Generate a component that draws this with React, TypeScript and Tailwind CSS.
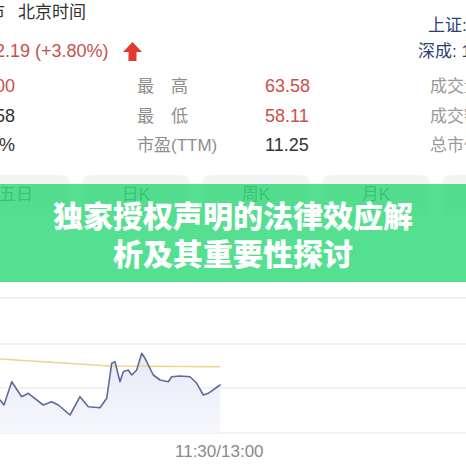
import React from "react";

const pts: [number, number][] = [
  [0, 110], [4, 115], [11.7, 91.7], [21.7, 106.7], [28.3, 103.3], [43.3, 115], [51.7, 111.7], [58.3, 115],
  [70, 125], [80, 106.7], [88.3, 116.7], [100, 117.7], [106.7, 108.3], [111.7, 73.3], [115, 71.7], [120, 91.7],
  [123.3, 81.7], [128.3, 80], [131.7, 85], [136.7, 80], [141.7, 63.3], [145, 68.3], [153.3, 85], [160, 90],
  [168.3, 91.7], [171.7, 86.7], [180, 86], [190, 86.7], [196.7, 93.3], [203.3, 105], [208.3, 103.3], [220, 95],
];

function Chart() {
  const line = pts.map((p) => p.join(",")).join(" ");
  const area = `0,143 ${line} 220,143`;
  return (
    <svg width="466" height="150" viewBox="0 0 466 150" className="block">
      <defs>
        <linearGradient id="fillg" x1="0" y1="0" x2="0" y2="1">
          <stop offset="0" stopColor="#e6eaf7" />
          <stop offset="1" stopColor="#f7f8fc" />
        </linearGradient>
      </defs>
      {[8, 54, 98, 143].map((y) => (
        <line key={y} x1="0" x2="466" y1={y} y2={y} stroke="#eeeeee" strokeWidth="1.5" />
      ))}
      <polygon points={area} fill="url(#fillg)" />
      <polyline points="0,69 110,76 220,76.7" fill="none" stroke="#ecd58c" strokeWidth="1.5" />
      <polyline points={line} fill="none" stroke="#5d6c98" strokeWidth="1.6" strokeLinejoin="round" strokeLinecap="round" />
    </svg>
  );
}

function Row({ a, aColor, label, value, vColor }: { a: string; aColor: string; label: string; value: string; vColor: string }) {
  return (
    <div className="flex h-[29.5px] items-center whitespace-nowrap">
      <div className={`w-[15px] flex justify-end text-[18px] ${aColor}`}>{a}</div>
      <div className="ml-[122px] w-[128px] text-[17px] text-[#8e8e8e]">{label}</div>
      <div className={`text-[18px] ${vColor}`}>{value}</div>
    </div>
  );
}

export default function App() {
  return (
    <div className="relative w-[466px] h-[466px] overflow-hidden bg-white font-['Liberation_Sans','Noto_Sans_CJK_SC',sans-serif]">
      <div className="flex">
        <div className="w-[418px] shrink-0">
          <div className="h-[25px] leading-[25px] text-[17px] text-[#333] -ml-[12px] whitespace-nowrap">
            市<span className="ml-[13px]">北京时间</span>
          </div>
          <div className="mt-[13px] h-[26px] flex items-center whitespace-nowrap">
            <span className="-ml-[5px] text-[18px] text-[#c8504c]">2.19 (+3.80%)</span>
            <svg width="19" height="19" viewBox="0 0 19 19" className="ml-[14px]">
              <path d="M9.5 0 L19 10 L13.5 10 L13.5 19 L5.5 19 L5.5 10 L0 10 Z" fill="#e23a2e" />
            </svg>
          </div>
          <div className="mt-[8px]">
            <Row a="61.00" aColor="text-[#c8504c]" label="最　高" value="63.58" vColor="text-[#c8504c]" />
            <Row a="59.58" aColor="text-[#333]" label="最　低" value="58.11" vColor="text-[#c8504c]" />
            <Row a="2.45%" aColor="text-[#333]" label="市盈(TTM)" value="11.25" vColor="text-[#333]" />
          </div>
        </div>
        <div className="flex-1 whitespace-nowrap">
          <div className="mt-[14px] ml-[10px] h-[24px] leading-[24px] text-[17px] text-[#2d3f73]">上证: 3,352.10</div>
          <div className="mt-[2px] h-[24px] leading-[24px] text-[17px] text-[#2d3f73]">深成: 11,235.60</div>
          <div className="mt-[8px] ml-[12px] text-[17px] text-[#9a9a9a]">
            <div className="h-[29.5px] flex items-center">成交量</div>
            <div className="h-[29.5px] flex items-center">成交额</div>
            <div className="h-[29.5px] flex items-center">总市值</div>
          </div>
        </div>
      </div>

      <div className="mt-[14.5px] flex gap-[12px] -ml-[38px]">
        {["五日", "日K", "周K", "月K", "年K"].map((t) => (
          <div key={t} className="w-[108px] h-[40px] shrink-0 rounded-[8px] bg-[#f4f4f5] flex items-center justify-center text-[17px] text-[#555]">
            {t}
          </div>
        ))}
      </div>

      <div className="mt-[75px]">
        <Chart />
      </div>
      <div className="mt-[2px] ml-[175px] h-[20px] leading-[20px] text-[17px] text-[#8a8a8a]">11:30/13:00</div>

      <div className="absolute left-0 right-0 top-[184px] h-[98px] bg-[rgba(50,216,122,0.83)] flex flex-col items-center justify-center">
        <div className="text-white text-[30px] leading-[38px] font-black font-['Noto_Sans_CJK_SC',sans-serif] text-center">
          独家授权声明的法律效应解
          <br />
          析及其重要性探讨
        </div>
      </div>
    </div>
  );
}
